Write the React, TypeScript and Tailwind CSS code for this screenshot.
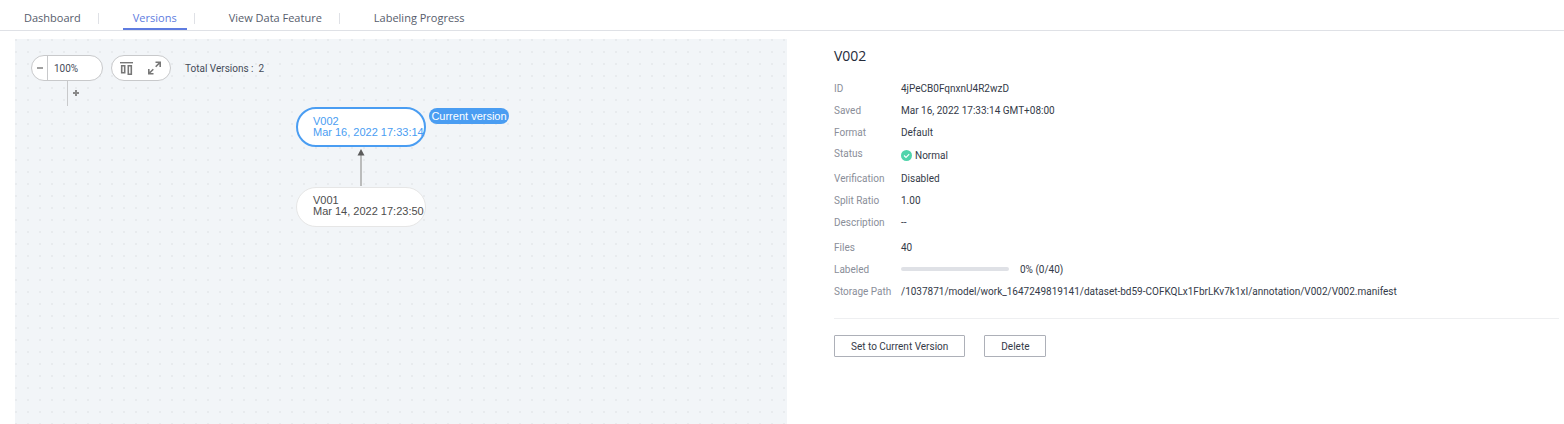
import React from "react";

const tabs = ["Dashboard", "Versions", "View Data Feature", "Labeling Progress"];

function Tabs() {
  return (
    <nav className="flex h-[31px] shrink-0 items-stretch border-b border-[#dfe1e6] pl-[14px] text-[11px] text-[#575d6c]">
      {tabs.map((tab, i) => {
        const active = tab === "Versions";
        return (
          <React.Fragment key={tab}>
            {i > 0 && <span className="mt-[13px] mr-[24px] ml-[7px] h-[11px] w-px bg-[#dfe1e6]" />}
            <a
              href="#"
              aria-current={active ? "page" : undefined}
              className={
                active
                  ? "border-b-2 border-[#5e7ce0] px-[10px] pt-[10px] leading-4 text-[#5e7ce0]"
                  : "border-b-2 border-transparent px-[10px] pt-[10px] leading-4"
              }
            >
              {tab}
            </a>
          </React.Fragment>
        );
      })}
    </nav>
  );
}

function Toolbar() {
  return (
    <div className="flex items-start pt-[16px] pl-[16px] font-['Roboto',sans-serif] text-[10px] text-[#464c59]">
      <div className="w-[72px]">
        <div className="flex h-[26px] items-center overflow-hidden rounded-full border border-[#c8c9cb] bg-white">
          <button aria-label="Zoom out" className="flex h-full w-[16px] items-center justify-center border-r border-[#c8c9cb]">
            <span className="h-[2px] w-[6px] bg-[#a0a0a0]" />
          </button>
          <span className="pl-[6px]">100%</span>
        </div>
        <button aria-label="Zoom in" className="ml-[36px] flex h-[25px] w-[17px] items-center justify-center border-l border-[#c8c9cb]">
          <svg width="6" height="6" viewBox="0 0 6 6" className="mb-px" fill="#8a8a8a">
            <path d="M2 0h2v2h2v2H4v2H2V4H0V2h2z" />
          </svg>
        </button>
      </div>
      <div className="ml-[8px] flex h-[26px] w-[60px] items-center justify-between rounded-full border border-[#c8c9cb] bg-white px-[8px]">
        <button aria-label="Align versions">
          <svg width="13" height="13" viewBox="0 0 13 13" fill="none" stroke="#777" className="block">
            <path d="M0 .7h13" strokeWidth="1.400" />
            <path d="M1.700 3.700h3v7h-3zM8.300 3.700h3v8.500h-3z" strokeWidth="1.600" />
          </svg>
        </button>
        <button aria-label="Full screen">
          <svg width="14" height="14" viewBox="0 0 14 14" fill="none" stroke="#777" strokeWidth="1.600" className="block">
            <path d="M7.500 1.200h4.700v4.700M12 1.400L7.700 5.700M.8 8v4.700h4.700M1 12.500L5.300 8.200" />
          </svg>
        </button>
      </div>
      <span className="ml-[14px] leading-[27px]">Total Versions :&nbsp; 2</span>
    </div>
  );
}

function Graph() {
  return (
    <div className="font-['Liberation_Sans',Arial,sans-serif] text-[11px] leading-[11px]">
      <div className="absolute top-[68px] left-[281px] h-[40px] w-[130px] rounded-[20px] border-2 border-[#4a9df2] bg-white pt-[7px] pl-[15px] whitespace-nowrap text-[#4a9df2]">
        <div>V002</div>
        <div>Mar 16, 2022 17:33:14</div>
      </div>
      <span className="absolute top-[69px] left-[414px] h-[16px] w-[80px] rounded-full bg-[#4a9df2] text-center leading-[16px] whitespace-nowrap text-white">
        Current version
      </span>
      <svg className="absolute top-[109px] left-[341px]" width="10" height="38" viewBox="0 0 10 38">
        <path d="M5 6v32" stroke="#a8a8a8" strokeWidth="1.500" />
        <path d="M5 1l3.500 6.500h-7z" fill="#5c5c5c" />
      </svg>
      <div className="absolute top-[148px] left-[281px] h-[40px] w-[130px] rounded-[20px] border border-[#e6e6e6] bg-white pt-[7px] pl-[16px] whitespace-nowrap text-[#4d4d4d]">
        <div>V001</div>
        <div>Mar 14, 2022 17:23:50</div>
      </div>
    </div>
  );
}

function Row({ label, children }: { label: string; children: React.ReactNode }) {
  return (
    <div className="flex h-[22px] items-center">
      <dt className="w-[67px] shrink-0 text-[#8a8e99]">{label}</dt>
      <dd className="flex min-w-0 items-center text-[#343a48]">{children}</dd>
    </div>
  );
}

function Details() {
  return (
    <section className="min-w-0 flex-[725] pt-[7px]">
      <h1 className="text-[14px] leading-5 text-[#252b3a]">V002</h1>
      <dl className="mt-[11px] font-['Roboto',sans-serif] text-[10px]">
        <Row label="ID">4jPeCB0FqnxnU4R2wzD</Row>
        <Row label="Saved">Mar 16, 2022 17:33:14 GMT+08:00</Row>
        <Row label="Format">Default</Row>
        <div className="flex h-[24px] items-start">
          <dt className="w-[67px] shrink-0 leading-[21px] text-[#8a8e99]">Status</dt>
          <dd className="flex items-center leading-[25px] text-[#343a48]">
            <svg width="11" height="11" viewBox="0 0 11 11" className="mr-[3px]">
              <circle cx="5.500" cy="5.500" r="5.500" fill="#50d4ab" />
              <path d="M3 5.500l2 2 3.200-3.400" fill="none" stroke="#fff" strokeWidth="1.100" />
            </svg>
            Normal
          </dd>
        </div>
        <Row label="Verification">Disabled</Row>
        <Row label="Split Ratio">1.00</Row>
        <Row label="Description">--</Row>
        <div className="pt-[3px]">
          <Row label="Files">40</Row>
          <Row label="Labeled">
            <span role="progressbar" aria-label="Labeled" aria-valuenow={0} className="mr-[11px] h-[4px] w-[108px] rounded-full bg-[#dfe1e6]" />
            0% (0/40)
          </Row>
          <Row label="Storage Path">
            /1037871/model/work_1647249819141/dataset-bd59-COFKQLx1FbrLKv7k1xI/annotation/V002/V002.manifest
          </Row>
        </div>
      </dl>
      <div className="mt-[16px] flex gap-[19px] border-t border-[#eeeff1] pt-[16px] font-['Roboto',sans-serif] text-[10px] text-[#343a48]">
        <button className="h-[22px] rounded-[1px] border border-[#adb0b8] px-[16px]">Set to Current Version</button>
        <button className="h-[22px] rounded-[1px] border border-[#adb0b8] px-[16px]">Delete</button>
      </div>
    </section>
  );
}

export default function App() {
  return (
    <div className="flex min-h-screen flex-col bg-white font-['Open_Sans','Noto_Sans',sans-serif]">
      <Tabs />
      <main className="flex flex-1 gap-[47px] pt-[8px] pr-[5px] pl-[15px]">
        <section className="relative min-w-0 flex-[772] bg-[#f2f5f8] bg-[radial-gradient(circle_at_1px_1px,#e8ebee_1px,transparent_1px)] bg-[length:12px_12px]">
          <Toolbar />
          <Graph />
        </section>
        <Details />
      </main>
    </div>
  );
}
